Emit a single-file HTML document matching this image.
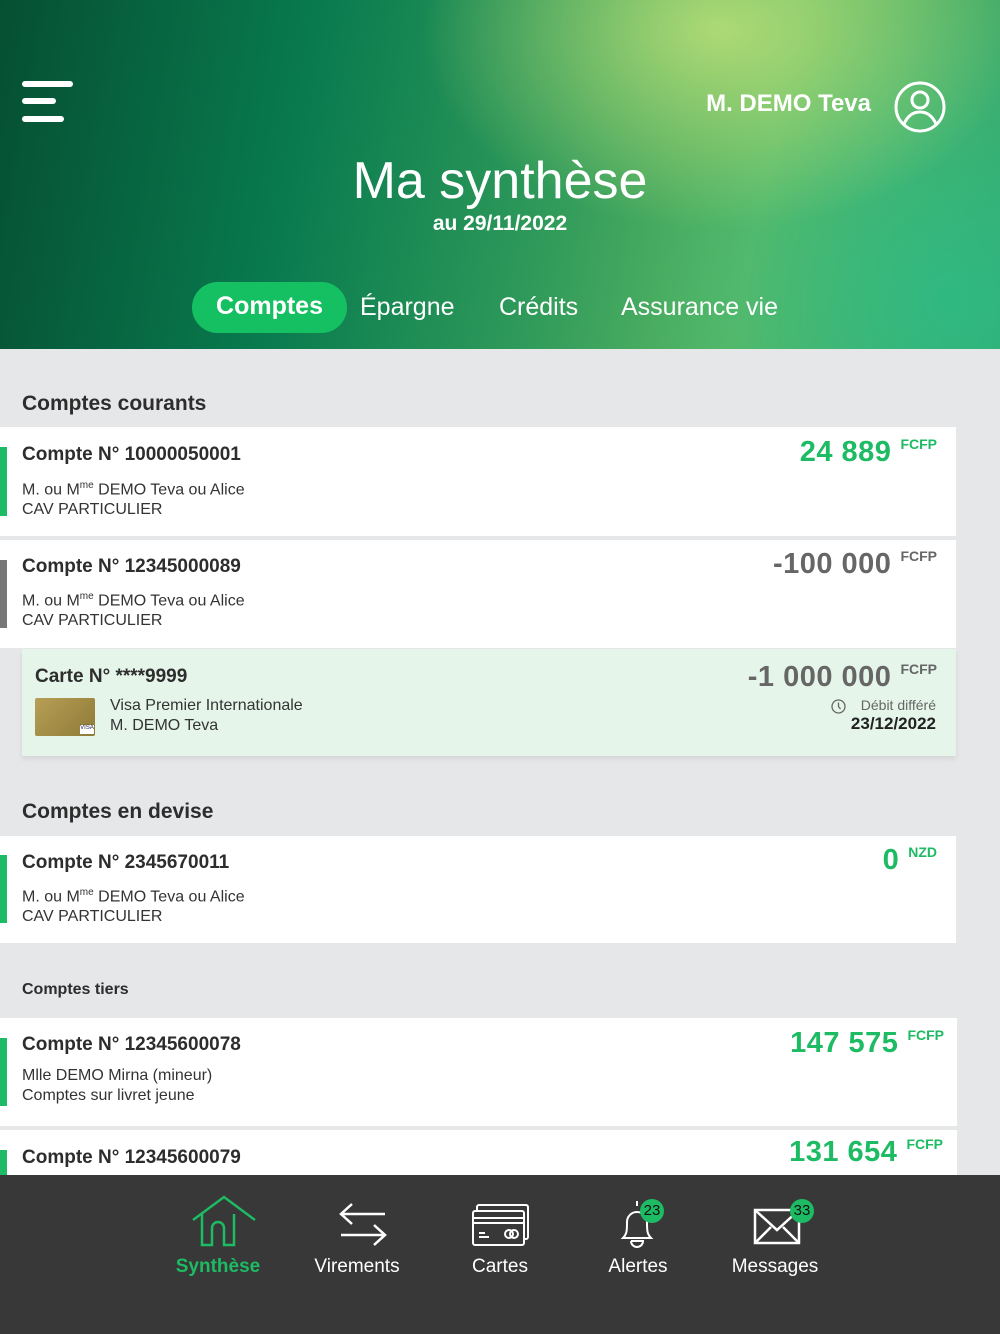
<!DOCTYPE html>
<html><head><meta charset="utf-8"><style>
*{margin:0;padding:0;box-sizing:border-box}
body{width:1000px;height:1334px;overflow:hidden;background:#e6e7e9;font-family:"Liberation Sans",sans-serif;color:#333;position:relative}
.abs{position:absolute}
.hdr{left:0;top:0;width:1000px;height:349px;background:
radial-gradient(ellipse 300px 200px at 720px 30px,rgba(190,225,120,.85),rgba(190,225,120,0) 100%),
radial-gradient(ellipse 300px 300px at 950px 300px,rgba(40,190,140,.7),rgba(40,190,140,0)),
linear-gradient(100deg,#064f33 0%,#087a4e 30%,#2f9a5a 55%,#5bb865 75%,#3aa86a 100%)}
.card{background:#fff;left:0;width:956px}
.bar{left:0;width:7px}
.t{font-weight:bold;font-size:19px;color:#2d2d2d}
.s{font-size:16px;color:#333;line-height:20px}
.amt{font-weight:bold;font-size:29px;text-align:right;letter-spacing:.5px}
.amt sup{font-size:14px;vertical-align:top;position:relative;top:0px;margin-left:9px;letter-spacing:0}
.g{color:#1dbb63}
.nav{left:0;top:1175px;width:1000px;height:159px;background:#383838}
.nl{font-size:19px;color:#fff;text-align:center;width:140px;top:1256px}
.badge{width:24px;height:24px;border-radius:12px;background:#1dbb63;color:#111;font-size:15px;text-align:center;line-height:24px}
</style></head><body>
<div class="abs hdr"></div>
<div class="abs" style="left:22px;top:81px;width:51px;height:6px;background:#fff;border-radius:3px"></div>
<div class="abs" style="left:22px;top:98px;width:34px;height:6px;background:#fff;border-radius:3px"></div>
<div class="abs" style="left:22px;top:116px;width:42px;height:6px;background:#fff;border-radius:3px"></div>
<div class="abs" style="left:640px;top:90px;width:231px;text-align:right;color:#fff;font-size:24px;font-weight:bold">M. DEMO Teva</div>
<svg class="abs" style="left:893px;top:80px" width="54" height="54" viewBox="0 0 54 54" fill="none" stroke="#fff" stroke-width="3"><circle cx="27" cy="27" r="24"/><circle cx="27" cy="20" r="8"/><path d="M11 44c4-9 10-12 16-12s12 3 16 12"/></svg>
<div class="abs" style="left:0;top:151px;width:1000px;text-align:center;color:#fff;font-size:52px">Ma synthèse</div>
<div class="abs" style="left:0;top:212px;width:1000px;text-align:center;color:#fff;font-size:21px;font-weight:bold">au 29/11/2022</div>
<div class="abs" style="left:192px;top:282px;width:155px;height:51px;border-radius:26px;background:#14c062"></div>
<div class="abs" style="left:192px;top:292px;width:155px;text-align:center;color:#fff;font-size:25px;font-weight:bold">Comptes</div>
<div class="abs" style="left:360px;top:293px;color:#fff;font-size:25px">Épargne</div>
<div class="abs" style="left:499px;top:293px;color:#fff;font-size:25px">Crédits</div>
<div class="abs" style="left:621px;top:293px;color:#fff;font-size:25px">Assurance vie</div>

<div class="abs t" style="left:22px;top:392px;font-size:21px">Comptes courants</div>
<div class="abs card" style="top:427px;height:109px"></div>
<div class="abs bar" style="top:447px;height:69px;background:#1dbb63"></div>
<div class="abs t" style="left:22px;top:444px">Compte N° 10000050001</div>
<div class="abs s" style="left:22px;top:476px">M. ou M<sup style="font-size:10px">me</sup> DEMO Teva ou Alice<br>CAV PARTICULIER</div>
<div class="abs amt g" style="right:63px;top:436px">24 889<sup>FCFP</sup></div>

<div class="abs card" style="top:540px;height:108px"></div>
<div class="abs bar" style="top:560px;height:68px;background:#777"></div>
<div class="abs t" style="left:22px;top:556px">Compte N° 12345000089</div>
<div class="abs s" style="left:22px;top:587px">M. ou M<sup style="font-size:10px">me</sup> DEMO Teva ou Alice<br>CAV PARTICULIER</div>
<div class="abs amt" style="right:63px;top:548px;color:#666">-100 000<sup>FCFP</sup></div>

<div class="abs" style="left:22px;top:649px;width:934px;height:107px;background:#e5f5ea;box-shadow:0 3px 5px rgba(0,0,0,.08)"></div>
<div class="abs t" style="left:35px;top:666px">Carte N° ****9999</div>
<div class="abs" style="left:35px;top:698px;width:60px;height:38px;border-radius:2px;background:linear-gradient(135deg,#b79f55,#8e7a38)"></div>
<div class="abs" style="left:80px;top:725px;width:14px;height:9px;background:#fff;font-size:6px;color:#224;text-align:center">VISA</div>
<div class="abs s" style="left:110px;top:696px">Visa Premier Internationale<br>M. DEMO Teva</div>
<div class="abs amt" style="right:63px;top:661px;color:#666">-1 000 000<sup>FCFP</sup></div>
<svg class="abs" style="left:831px;top:699px" width="15" height="15" viewBox="0 0 15 15" fill="none" stroke="#666" stroke-width="1.3"><circle cx="7.5" cy="7.5" r="6.5"/><path d="M7.5 3.5v4l2 2.5"/></svg>
<div class="abs" style="right:64px;top:697px;font-size:14px;color:#666">Débit différé</div>
<div class="abs" style="right:64px;top:714px;font-size:17px;font-weight:bold;color:#222">23/12/2022</div>

<div class="abs t" style="left:22px;top:800px;font-size:21px">Comptes en devise</div>
<div class="abs card" style="top:836px;height:107px"></div>
<div class="abs bar" style="top:855px;height:68px;background:#1dbb63"></div>
<div class="abs t" style="left:22px;top:852px">Compte N° 2345670011</div>
<div class="abs s" style="left:22px;top:883px">M. ou M<sup style="font-size:10px">me</sup> DEMO Teva ou Alice<br>CAV PARTICULIER</div>
<div class="abs amt g" style="right:63px;top:844px">0<sup>NZD</sup></div>

<div class="abs t" style="left:22px;top:981px;font-size:16px">Comptes tiers</div>
<div class="abs card" style="top:1018px;height:108px;width:957px"></div>
<div class="abs bar" style="top:1038px;height:68px;background:#1dbb63"></div>
<div class="abs t" style="left:22px;top:1034px">Compte N° 12345600078</div>
<div class="abs s" style="left:22px;top:1066px">Mlle DEMO Mirna (mineur)<br>Comptes sur livret jeune</div>
<div class="abs amt g" style="right:56px;top:1027px">147 575<sup>FCFP</sup></div>
<div class="abs card" style="top:1130px;height:50px;width:957px"></div>
<div class="abs bar" style="top:1150px;height:30px;background:#1dbb63"></div>
<div class="abs t" style="left:22px;top:1147px">Compte N° 12345600079</div>
<div class="abs amt g" style="right:57px;top:1136px">131 654<sup>FCFP</sup></div>

<div class="abs nav"></div>
<svg class="abs" style="left:190px;top:1195px" width="68" height="52" viewBox="0 0 68 52" fill="none" stroke="#1dbb63" stroke-width="2.5"><path d="M3 25L34 2l31 23M12 19v31h10V33a6 6 0 0 1 12 0v17h10V19"/></svg>
<div class="abs nl" style="left:148px;color:#1dbb63;font-weight:bold">Synthèse</div>
<svg class="abs" style="left:338px;top:1202px" width="50" height="45" viewBox="0 0 50 45" fill="none" stroke="#fff" stroke-width="2.5"><path d="M3 12h44M14 2L3 12l11 10M3 33h44M36 23l11 10-11 10"/></svg>
<div class="abs nl" style="left:287px">Virements</div>
<svg class="abs" style="left:471px;top:1203px" width="60" height="45" viewBox="0 0 60 45" fill="none" stroke="#fff" stroke-width="2"><rect x="6" y="2" width="51" height="34" rx="2"/><rect x="2" y="8" width="51" height="34" rx="2" fill="#383838"/><path d="M2 15h51M2 20h51M8 30h6M8 34h10"/><circle cx="38" cy="31" r="4"/><circle cx="43" cy="31" r="4"/></svg>
<div class="abs nl" style="left:430px">Cartes</div>
<svg class="abs" style="left:615px;top:1198px" width="44" height="50" viewBox="0 0 44 50" fill="none" stroke="#fff" stroke-width="2"><path d="M22 3v5M8 40c4-4 4-8 4-16a10 10 0 0 1 20 0c0 8 0 12 4 16zM16 43h12a6 6 0 0 1-12 0"/></svg>
<div class="abs badge" style="left:640px;top:1199px">23</div>
<div class="abs nl" style="left:568px">Alertes</div>
<svg class="abs" style="left:753px;top:1208px" width="52" height="38" viewBox="0 0 52 38" fill="none" stroke="#fff" stroke-width="2.5"><rect x="2" y="2" width="44" height="33"/><path d="M2 2l22 20 22-20M2 35l16-16M46 35L30 19"/></svg>
<div class="abs badge" style="left:790px;top:1199px">33</div>
<div class="abs nl" style="left:705px">Messages</div>
</body></html>
